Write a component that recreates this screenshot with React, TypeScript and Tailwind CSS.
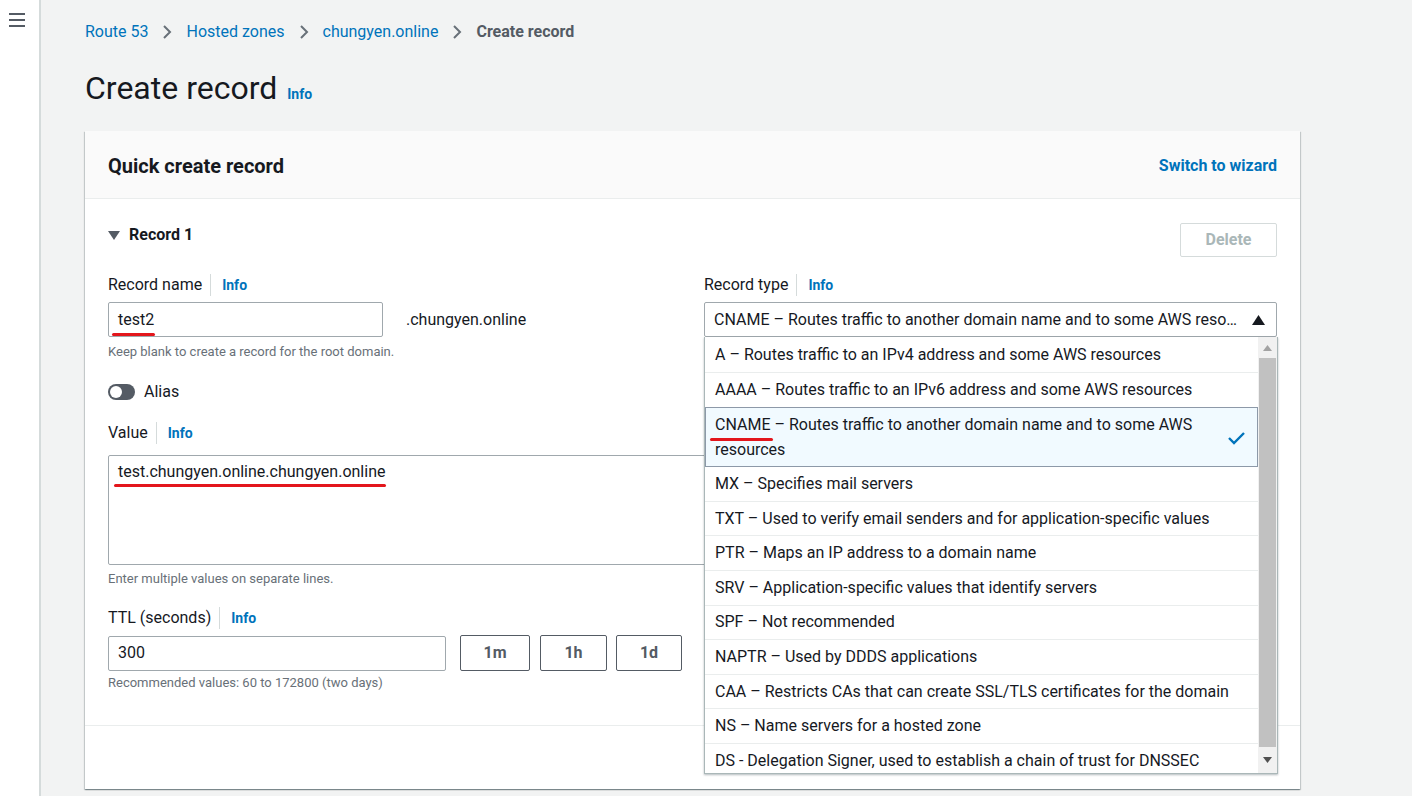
import React from "react";

const FONT = { fontFamily: "Roboto, 'Noto Sans', Arial, sans-serif" };

function Info() {
  return (
    <span className="ml-[8px] border-l border-[#d5dbdb] pl-[11px] text-[14px] font-bold leading-[22px] text-[#0073bb]">
      Info
    </span>
  );
}

function Label({ children }: { children: React.ReactNode }) {
  return (
    <div className="flex items-center text-[16px] leading-[22px] text-[#16191f]">
      <span>{children}</span>
      <Info />
    </div>
  );
}

function Underlined({ children, className }: { children: React.ReactNode; className: string }) {
  return (
    <span className="relative inline-block">
      {children}
      <span className={"absolute h-[3px] rounded-full bg-[#e3161c] " + className} />
    </span>
  );
}

function Chevron() {
  return (
    <svg width="10" height="16" viewBox="0 0 10 16" className="mx-[14px]">
      <path d="M2 2 L8 8 L2 14" fill="none" stroke="#687078" strokeWidth="2" />
    </svg>
  );
}

const options: { key: string; rest: string }[] = [
  { key: "A", rest: " – Routes traffic to an IPv4 address and some AWS resources" },
  { key: "AAAA", rest: " – Routes traffic to an IPv6 address and some AWS resources" },
  { key: "CNAME", rest: " – Routes traffic to another domain name and to some AWS resources" },
  { key: "MX", rest: " – Specifies mail servers" },
  { key: "TXT", rest: " – Used to verify email senders and for application-specific values" },
  { key: "PTR", rest: " – Maps an IP address to a domain name" },
  { key: "SRV", rest: " – Application-specific values that identify servers" },
  { key: "SPF", rest: " – Not recommended" },
  { key: "NAPTR", rest: " – Used by DDDS applications" },
  { key: "CAA", rest: " – Restricts CAs that can create SSL/TLS certificates for the domain" },
  { key: "NS", rest: " – Name servers for a hosted zone" },
  { key: "DS", rest: " - Delegation Signer, used to establish a chain of trust for DNSSEC" },
];

function Dropdown() {
  return (
    <div className="absolute left-0 right-[-1px] top-full z-10 flex h-[437px] border border-t-0 border-[#aab7b8] bg-white shadow-[0_1px_2px_rgba(0,28,36,0.3)]">
      <div className="flex-1 overflow-hidden pt-[1px]">
        {options.map((o, i) => {
          if (o.key === "CNAME") {
            return (
              <div
                key={o.key}
                className="relative flex h-[60px] items-center border border-[#8d99a8] bg-[#f1faff] pl-[9px] pr-[40px] text-[16px] leading-[25px] text-[#16191f]"
              >
                <div>
                  <Underlined className="left-[-5px] right-[-3px] bottom-[-4px]">CNAME</Underlined>
                  {o.rest}
                </div>
                <svg width="20" height="16" viewBox="0 0 20 16" className="absolute right-[10px] top-[22px]">
                  <path d="M2 8 L7 13 L17 3" fill="none" stroke="#0073bb" strokeWidth="2.4" />
                </svg>
              </div>
            );
          }
          const next = options[i + 1];
          const noBorder = next && next.key === "CNAME";
          return (
            <div
              key={o.key}
              className={
                "flex h-[34.6px] items-center px-[10px] text-[16px] text-[#16191f] " +
                (noBorder || o.key === "DS" ? "" : "border-b border-[#eaeded]")
              }
            >
              {o.key}
              {o.rest}
            </div>
          );
        })}
      </div>
      <div className="flex w-[19px] flex-col bg-[#f1f1f1]">
        <div className="flex h-[21px] items-center justify-center">
          <svg width="9" height="6" viewBox="0 0 9 6">
            <path d="M0 6 L4.5 0 L9 6 Z" fill="#a3a3a3" />
          </svg>
        </div>
        <div className="mx-[1px] flex-1 bg-[#c1c1c1]" />
        <div className="flex h-[26px] items-center justify-center">
          <svg width="9" height="6" viewBox="0 0 9 6">
            <path d="M0 0 L4.5 6 L9 0 Z" fill="#505050" />
          </svg>
        </div>
      </div>
    </div>
  );
}

export default function App() {
  return (
    <div className="flex h-[796px] w-full overflow-hidden bg-[#f2f3f3]" style={FONT}>
      {/* sidebar */}
      <div className="w-[41px] shrink-0 border-r-2 border-[#d5dbdb] bg-white">
        <div className="ml-[9px] mt-[13px] flex w-[16px] flex-col gap-[4px]">
          <div className="h-[2px] bg-[#545b64]" />
          <div className="h-[2px] bg-[#545b64]" />
          <div className="h-[2px] bg-[#545b64]" />
        </div>
      </div>

      {/* main */}
      <div className="w-[1259px] shrink-0 pl-[44px]">
        {/* breadcrumb */}
        <div className="mt-[20px] flex h-[24px] items-center text-[16px] leading-[24px]">
          <span className="text-[#0073bb]">Route 53</span>
          <Chevron />
          <span className="text-[#0073bb]">Hosted zones</span>
          <Chevron />
          <span className="text-[#0073bb]">chungyen.online</span>
          <Chevron />
          <span className="font-bold text-[#545b64]">Create record</span>
        </div>

        {/* title */}
        <div className="mt-[24px] flex h-[40px] items-end">
          <h1 className="text-[32px] font-normal leading-[40px] text-[#16191f]">Create record</h1>
          <span className="mb-[4px] ml-[10px] text-[14px] font-bold leading-[20px] text-[#0073bb]">Info</span>
        </div>

        {/* card */}
        <div className="mt-[23px] w-[1215px] bg-white shadow-[0_1px_1px_0_rgba(0,28,36,0.3),1px_1px_1px_0_rgba(0,28,36,0.15),-1px_1px_1px_0_rgba(0,28,36,0.15)]">
          <div className="flex items-center justify-between border-b border-[#eaeded] bg-[#fafafa] px-[23px] pb-[18px] pt-[21px]">
            <h2 className="text-[20px] font-bold leading-[28px] text-[#16191f]">Quick create record</h2>
            <span className="text-[16px] font-bold leading-[24px] text-[#0073bb]">Switch to wizard</span>
          </div>

          <div className="px-[23px] pb-[33px] pt-[24px]">
            <div className="flex items-start justify-between">
              <div className="mt-[1px] flex h-[22px] items-center text-[16px] font-bold text-[#16191f]">
                <svg width="12" height="10" viewBox="0 0 12 10" className="mr-[9px]">
                  <path d="M0 1 L12 1 L6 10 Z" fill="#545b64" />
                </svg>
                Record 1
              </div>
              <button className="h-[34px] w-[97px] rounded-[2px] border border-[#d5dbdb] bg-white text-[16px] font-bold text-[#aab7b8]">
                Delete
              </button>
            </div>

            <div className="mt-[17px] grid grid-cols-[574px_573px] gap-x-[22px]">
              {/* left column */}
              <div>
                <Label>Record name</Label>
                <div className="mt-[6px] flex items-center">
                  <div className="flex h-[35px] w-[275px] items-center rounded-[2px] border border-[#a0a8ad] px-[9px] text-[16px] text-[#16191f]">
                    <Underlined className="left-[-6px] right-[-1px] bottom-[-4px]">test2</Underlined>
                  </div>
                  <span className="ml-[23px] text-[16px] text-[#16191f]">.chungyen.online</span>
                </div>
                <div className="mt-[6px] text-[13px] leading-[18px] text-[#687078]">
                  Keep blank to create a record for the root domain.
                </div>

                <div className="mt-[19px] flex h-[24px] items-center">
                  <div className="flex h-[16px] w-[27px] items-center rounded-full bg-[#545b64] pl-[2px]">
                    <div className="h-[12px] w-[12px] rounded-full bg-white" />
                  </div>
                  <span className="ml-[9px] text-[16px] text-[#16191f]">Alias</span>
                </div>
              </div>

              {/* right column */}
              <div>
                <Label>Record type</Label>
                <div className="relative mt-[6px]">
                  <div className="flex h-[35px] items-center rounded-[2px] border border-[#a0a8ad] pl-[9px] pr-[11px] text-[16px] text-[#16191f]">
                    <span className="min-w-0 flex-1 truncate pr-[10px]">
                      CNAME – Routes traffic to another domain name and to some AWS resources
                    </span>
                    <svg width="13" height="10" viewBox="0 0 13 10">
                      <path d="M0 10 L6.5 0 L13 10 Z" fill="#16191f" />
                    </svg>
                  </div>
                  <Dropdown />
                </div>
              </div>
            </div>

            {/* value */}
            <div className="mt-[18px]">
              <Label>Value</Label>
              <div className="mt-[11px] h-[110px] w-full rounded-[2px] border border-[#a0a8ad] px-[9px] pt-[4px] text-[16px] leading-[24px] text-[#16191f]">
                <Underlined className="left-[-4px] right-[-1px] bottom-[-3px]">test.chungyen.online.chungyen.online</Underlined>
              </div>
              <div className="mt-[5px] text-[13px] leading-[18px] text-[#687078]">
                Enter multiple values on separate lines.
              </div>
            </div>

            {/* TTL */}
            <div className="mt-[19px] w-[574px]">
              <Label>TTL (seconds)</Label>
              <div className="mt-[6px] flex items-center">
                <div className="flex h-[35px] w-[338px] items-center rounded-[2px] border border-[#a0a8ad] px-[9px] text-[16px] text-[#16191f]">
                  300
                </div>
                <button className="ml-[14px] h-[36px] w-[70px] rounded-[2px] border border-[#545b64] bg-white text-[16px] font-bold text-[#545b64]">
                  1m
                </button>
                <button className="ml-[10px] h-[36px] w-[67px] rounded-[2px] border border-[#545b64] bg-white text-[16px] font-bold text-[#545b64]">
                  1h
                </button>
                <button className="ml-[9px] h-[36px] w-[66px] rounded-[2px] border border-[#545b64] bg-white text-[16px] font-bold text-[#545b64]">
                  1d
                </button>
              </div>
              <div className="mt-[3px] text-[13px] leading-[18px] text-[#687078]">
                Recommended values: 60 to 172800 (two days)
              </div>
            </div>
          </div>

          <div className="h-[64px] border-t border-[#eaeded]" />
        </div>
      </div>
    </div>
  );
}
